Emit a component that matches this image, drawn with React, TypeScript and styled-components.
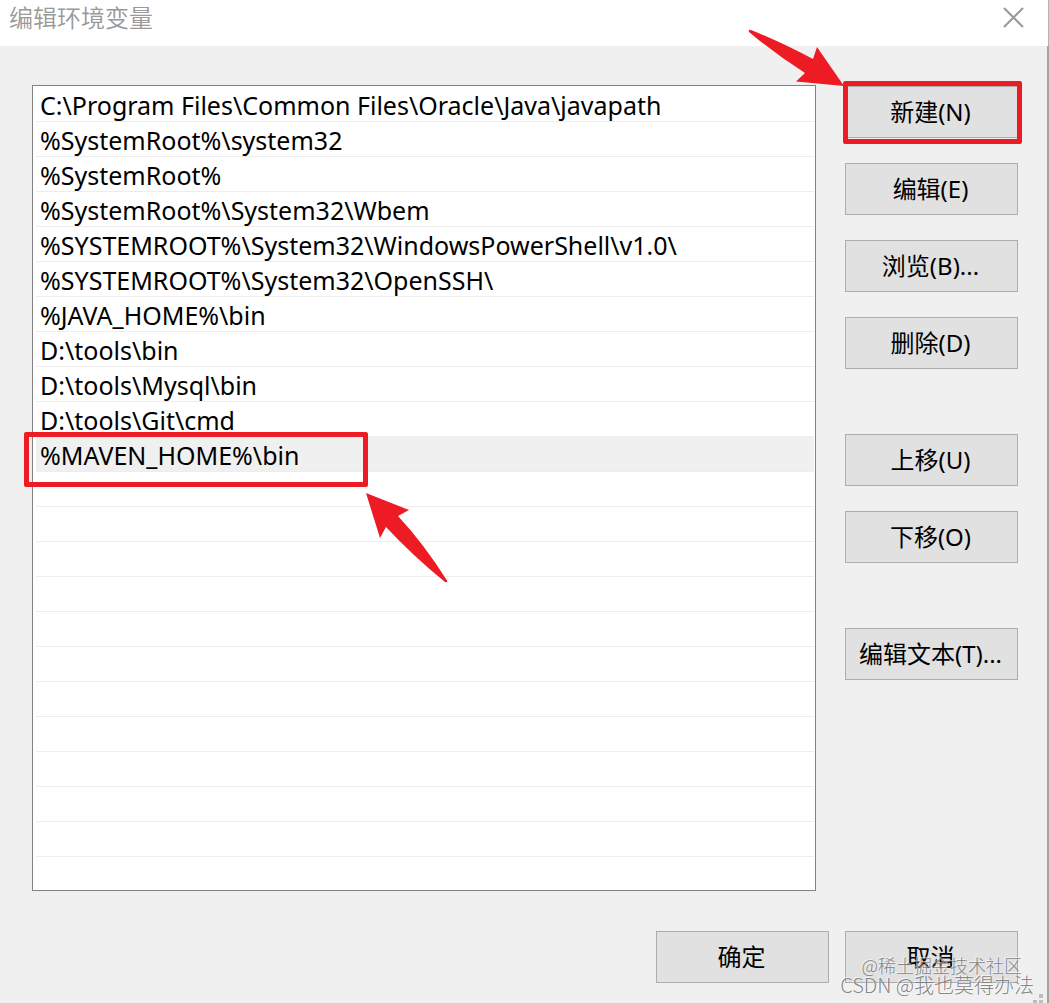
import React from "react";
import styled, { createGlobalStyle, css } from "styled-components";

const RED = "#ed1c24";

const GlobalStyle = createGlobalStyle`
  *, *::before, *::after { box-sizing: border-box; }
  body {
    margin: 0;
    background: #f0f0f0;
    color: #000;
    font-family: "Noto Sans", "Noto Sans CJK SC", sans-serif;
    font-size: 24px;
  }
`;

const Dialog = styled.main`
  position: relative;
  display: flex;
  flex-direction: column;
  min-height: 100vh;
  overflow: hidden;
  background: #f0f0f0;
`;

const TitleBar = styled.header`
  display: flex;
  align-items: center;
  justify-content: space-between;
  height: 46px;
  padding: 0 24px 12px 9px;
  border-right: 1px solid #b4b4b4;
  background: #fff;
`;

const Title = styled.h1`
  margin: 0;
  color: #999;
  font-size: 24px;
  font-weight: 350;
  line-height: 34px;
  font-family: "Noto Sans CJK SC", sans-serif;
`;

const CloseButton = styled.button`
  display: flex;
  padding: 0;
  border: 0;
  background: none;
`;

const Body = styled.div`
  display: flex;
  flex: 1;
  flex-direction: column;
  gap: 40px;
  padding: 39px 29px 20px 32px;
  border-right: 2px solid #a3a3a3;
`;

const Columns = styled.div`
  display: flex;
  align-items: flex-start;
  gap: 29px;
`;

const PathList = styled.ul`
  flex: 1;
  min-width: 0;
  margin: 0;
  padding: 1px 1px 0 3px;
  border: 1px solid #828282;
  background: #fff;
  font-size: 25px;
  list-style: none;
`;

const PathRow = styled.li<{ $selected?: boolean }>`
  position: relative;
  height: 35px;
  padding-left: 4px;
  border-bottom: 1px solid #ededed;
  line-height: 36px;
  white-space: nowrap;
  ${(p) =>
    p.$selected &&
    css`
      background: #f0f0f0;
    `}
  &:last-child {
    height: 33px;
    border-bottom: 0;
  }
`;

const Actions = styled.div`
  display: flex;
  flex-direction: column;
  gap: 65px;
  width: 173px;
  padding-top: 1px;
`;

const ActionGroup = styled.div`
  display: flex;
  flex-direction: column;
  gap: 25px;
`;

const PushButton = styled.button`
  width: 173px;
  height: 52px;
  padding: 0 2px 0 0;
  border: 1px solid #adadad;
  background: #e1e1e1;
  color: #000;
  font: inherit;
  line-height: 50px;
  white-space: nowrap;
`;

const Marked = styled.div`
  position: relative;
`;

const Outline = styled.span`
  position: absolute;
  border: 5px solid ${RED};
  border-radius: 2px;
  pointer-events: none;
`;

const ButtonOutline = styled(Outline)`
  inset: -5px -4px -6px -2px;
`;

const RowOutline = styled(Outline)`
  top: -5px;
  left: -12px;
  width: 344px;
  height: 55px;
  z-index: 1;
`;

const ButtonArrow = styled.svg`
  position: absolute;
  top: -58px;
  left: -98px;
  pointer-events: none;
`;

const RowArrow = styled.svg`
  position: absolute;
  top: 56px;
  left: 329px;
  z-index: 1;
  pointer-events: none;
`;

const Footer = styled.footer`
  display: flex;
  justify-content: flex-end;
  gap: 16px;
`;

const Watermark = styled.div`
  position: absolute;
  right: 15px;
  bottom: 7px;
  display: flex;
  flex-direction: column;
  align-items: flex-end;
  color: rgba(120, 120, 120, 0.9);
  font-family: "Noto Sans CJK SC", sans-serif;
  font-weight: 300;
  text-shadow: -1px -1px 0 rgba(255, 255, 255, 0.6);
  white-space: nowrap;
  pointer-events: none;
`;

const Community = styled.span`
  padding-right: 12px;
  font-size: 18px;
  line-height: 18px;
`;

const Author = styled.span`
  font-size: 20px;
  line-height: 22px;
`;

const Grip = styled.svg`
  position: absolute;
  right: 5px;
  bottom: 0;
`;

const paths = [
  "C:\\Program Files\\Common Files\\Oracle\\Java\\javapath",
  "%SystemRoot%\\system32",
  "%SystemRoot%",
  "%SystemRoot%\\System32\\Wbem",
  "%SYSTEMROOT%\\System32\\WindowsPowerShell\\v1.0\\",
  "%SYSTEMROOT%\\System32\\OpenSSH\\",
  "%JAVA_HOME%\\bin",
  "D:\\tools\\bin",
  "D:\\tools\\Mysql\\bin",
  "D:\\tools\\Git\\cmd",
  "%MAVEN_HOME%\\bin",
];
const ROW_COUNT = 23;
const SELECTED = 10;

export default function App() {
  return (
    <>
      <GlobalStyle />
      <Dialog>
        <TitleBar>
          <Title>编辑环境变量</Title>
          <CloseButton type="button" aria-label="关闭">
            <svg width="21" height="21" viewBox="0 0 21 21" stroke="#999" strokeWidth="2">
              <path d="M1 1 20 20M20 1 1 20" />
            </svg>
          </CloseButton>
        </TitleBar>
        <Body>
          <Columns>
            <PathList>
              {Array.from({ length: ROW_COUNT }, (_, i) => (
                <PathRow key={i} $selected={i === SELECTED}>
                  {paths[i]}
                  {i === SELECTED && (
                    <>
                      <RowOutline />
                      <RowArrow width="86" height="92" viewBox="0 0 86 92" fill={RED} aria-hidden="true">
                        <path d="M1 0 44 17 33 23Q59 51 82 87.500Q83 90 80 89Q48 63 21 34L15 45Z" />
                      </RowArrow>
                    </>
                  )}
                </PathRow>
              ))}
            </PathList>
            <Actions>
              <ActionGroup>
                <Marked>
                  <PushButton type="button">新建(N)</PushButton>
                  <ButtonOutline />
                  <ButtonArrow width="100" height="60" viewBox="0 0 100 60" fill={RED} aria-hidden="true">
                    <path d="M4 2Q1 1 2 4Q28 26 58 45L49 53.500 97 58 70 19 66 31Q34 14 4 2Z" />
                  </ButtonArrow>
                </Marked>
                <PushButton type="button">编辑(E)</PushButton>
                <PushButton type="button">浏览(B)...</PushButton>
                <PushButton type="button">删除(D)</PushButton>
              </ActionGroup>
              <ActionGroup>
                <PushButton type="button">上移(U)</PushButton>
                <PushButton type="button">下移(O)</PushButton>
              </ActionGroup>
              <PushButton type="button">编辑文本(T)...</PushButton>
            </Actions>
          </Columns>
          <Footer>
            <PushButton type="button">确定</PushButton>
            <PushButton type="button">取消</PushButton>
          </Footer>
        </Body>
        <Watermark>
          <Community>@稀土掘金技术社区</Community>
          <Author>CSDN @我也莫得办法</Author>
        </Watermark>
        <Grip width="11" height="9" viewBox="0 0 11 9" fill="#bdbdbd" aria-hidden="true">
          <path d="M6 0h4v4H6zM6 6h4v3H6zM0 6h4v3H0z" />
        </Grip>
      </Dialog>
    </>
  );
}
